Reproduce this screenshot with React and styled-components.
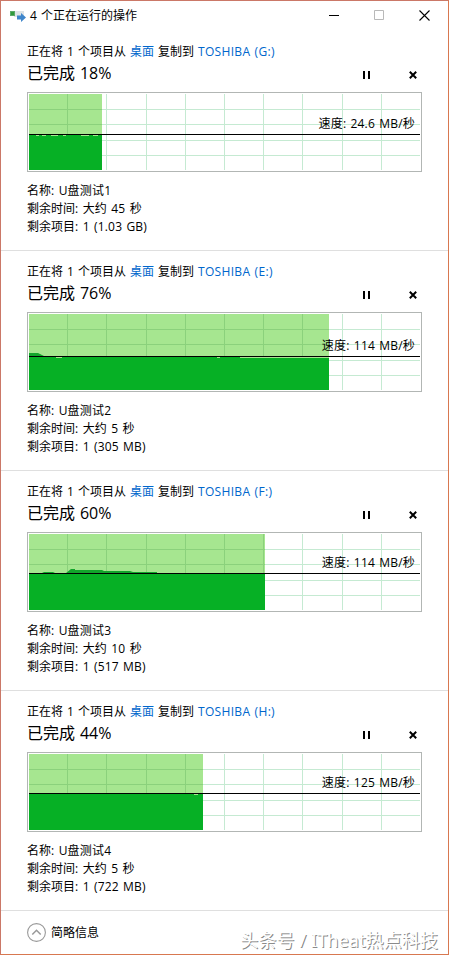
import styled, { createGlobalStyle } from "styled-components";

const tasks = [
  {
    id: 1,
    drive: "TOSHIBA (G:)",
    percent: 18,
    speed: "24.6 MB/秒",
    name: "U盘测试1",
    time: "大约 45 秒",
    items: "1 (1.03 GB)",
    fill: 73,
    line: 40,
    gaps: [[7, 3], [13, 4], [22, 7], [34, 3], [52, 8], [64, 5]],
  },
  {
    id: 2,
    drive: "TOSHIBA (E:)",
    percent: 76,
    speed: "114 MB/秒",
    name: "U盘测试2",
    time: "大约 5 秒",
    items: "1 (305 MB)",
    fill: 300,
    line: 42,
    bump: "M0 42V39H9L15 42Z",
    gaps: [[27, 6], [188, 3], [211, 89]],
  },
  {
    id: 3,
    drive: "TOSHIBA (F:)",
    percent: 60,
    speed: "114 MB/秒",
    name: "U盘测试3",
    time: "大约 10 秒",
    items: "1 (517 MB)",
    fill: 236,
    line: 39,
    bump: "M13 39L15 38H24L26 39H37L42 35H46V36H73L75 37H101L104 38H128V39Z",
    gaps: [],
  },
  {
    id: 4,
    drive: "TOSHIBA (H:)",
    percent: 44,
    speed: "125 MB/秒",
    name: "U盘测试4",
    time: "大约 5 秒",
    items: "1 (722 MB)",
    fill: 174,
    line: 39,
    gaps: [[165, 4]],
  },
];

const gridX = [38, 77, 117, 156, 195, 234, 273, 313, 352];
const gridY = [15, 30, 46, 61];

function Chart({ task }) {
  const { fill, line, bump, gaps, speed } = task;
  return (
    <ChartBox>
      <svg width="391" height="76" shapeRendering="crispEdges">
        <rect width={fill} height="76" fill="#a6e690" />
        {gridX.map((x) => (
          <rect key={x} x={x} width="1" height="76" fill={x < fill ? "#8bd17c" : "#c5ead2"} />
        ))}
        {gridY.map((y) => (
          <g key={y}>
            <rect y={y} width="391" height="1" fill="#c5ead2" />
            <rect y={y} width={fill} height="1" fill="#8bd17c" />
          </g>
        ))}
        <rect y={line} width={fill} height={76 - line} fill="#06b025" />
        {bump && <path d={bump} fill="#12a52b" shapeRendering="auto" />}
        {gaps.map(([x, w]) => (
          <rect key={x} x={x} y={line + 1} width={w} height="1" fill="#a6e690" />
        ))}
        <rect y={line} width="391" height="1" fill="#000" />
      </svg>
      <Speed $line={line}>速度: {speed}</Speed>
    </ChartBox>
  );
}

function CopyTask({ task }) {
  return (
    <Section>
      <Line>
        正在将 1 个项目从 <Link>桌面</Link> 复制到 <Link $spacing="0.32px">{task.drive}</Link>
      </Line>
      <Heading>
        <Percent>已完成 {task.percent}%</Percent>
        <Buttons>
          <svg width="7" height="8" shapeRendering="crispEdges">
            <path d="M0 0h2v8H0zM5 0h2v8H5z" fill="#000" />
          </svg>
          <svg width="8" height="8">
            <path d="M0.800 0.800L7.200 7.200M7.200 0.800L0.800 7.200" stroke="#000" strokeWidth="2" />
          </svg>
        </Buttons>
      </Heading>
      <Chart task={task} />
      <Line>
        名称: <Value>{task.name}</Value>
      </Line>
      <Line>
        剩余时间: <Value>{task.time}</Value>
      </Line>
      <Line>
        剩余项目: <Value>{task.items}</Value>
      </Line>
    </Section>
  );
}

function App() {
  return (
    <>
      <GlobalStyle />
      <Window>
        <TitleBar>
          <svg width="16" height="12">
            <rect x="4" y="1" width="10" height="6" fill="#dde3e6" />
            <rect x="0" y="1" width="5" height="5" fill="#5aa868" />
            <rect x="1" y="2" width="3" height="3" fill="#2f9a3c" />
            <path d="M7 5.500h4V3l5 4.500-5 4.500V9.500H7z" fill="#3f86cb" />
          </svg>
          <Title>4 个正在运行的操作</Title>
          <Controls>
            <svg width="10" height="10">
              <path d="M0 5.500h10" stroke="#000" />
            </svg>
            <svg width="10" height="10">
              <path d="M0.500 0.500h9v9h-9z" fill="none" stroke="#b9b9b9" />
            </svg>
            <svg width="11" height="11">
              <path d="M0.500 0.500l10 10M10.500 0.500l-10 10" stroke="#000" strokeWidth="1.1" />
            </svg>
          </Controls>
        </TitleBar>
        {tasks.map((task) => (
          <CopyTask key={task.id} task={task} />
        ))}
        <Footer>
          <svg width="19" height="19" fill="none">
            <circle cx="9.500" cy="9.500" r="8.900" stroke="#999" strokeWidth="1.1" />
            <path d="M5.300 11.500l4.200-4.200 4.200 4.200" stroke="#999" strokeWidth="1.5" />
          </svg>
          <Less>简略信息</Less>
          <Watermark>头条号 / ITheat热点科技</Watermark>
        </Footer>
      </Window>
    </>
  );
}

export default App;

const GlobalStyle = createGlobalStyle`
  body {
    margin: 0;
    background: #fff;
    color: #000;
    font-family: "Open Sans", "Noto Sans CJK SC", sans-serif;
    font-size: 12px;
  }
  svg {
    display: block;
    flex: none;
  }
`;

const Window = styled.div`
  box-sizing: border-box;
  width: 449px;
  height: 955px;
  border: 1px solid #d87850;
  border-left-color: #cb7867;
  border-top-color: #cb7867;
  display: flex;
  flex-direction: column;
  overflow: hidden;
`;

const TitleBar = styled.div`
  display: flex;
  align-items: center;
  height: 30px;
  padding: 0 18px 0 9px;
  box-sizing: border-box;
`;

const Title = styled.div`
  margin-left: 4px;
  line-height: 18px;
  word-spacing: 0.9px;
  white-space: nowrap;
`;

const Controls = styled.div`
  display: flex;
  align-items: center;
  gap: 35px;
  margin-left: auto;
  padding-bottom: 2px;
`;

const Section = styled.section`
  box-sizing: border-box;
  height: 220px;
  flex: none;
  padding: 12px 26px 0;
  border-bottom: 1px solid #dfdfdf;
`;

const Line = styled.div`
  line-height: 18px;
  word-spacing: 0.9px;
  white-space: nowrap;
`;

const Link = styled.span`
  color: #0066cc;
  letter-spacing: ${(props) => props.$spacing || "normal"};
`;

const Value = styled.span`
  margin-left: 0.5px;
  letter-spacing: 0.2px;
`;

const Heading = styled.div`
  display: flex;
  align-items: center;
  justify-content: space-between;
  margin-top: 1px;
  height: 22px;
`;

const Percent = styled.div`
  font-size: 16px;
  line-height: 22px;
  word-spacing: 0.8px;
  white-space: nowrap;
`;

const Buttons = styled.div`
  display: flex;
  gap: 39px;
  padding: 4px 5px 0 0;
`;

const ChartBox = styled.div`
  position: relative;
  box-sizing: border-box;
  width: 395px;
  height: 80px;
  margin: 8px 0 10px;
  padding: 1px;
  border: 1px solid #b2b6b4;
`;

const Speed = styled.div`
  position: absolute;
  right: 6px;
  top: ${(props) => props.$line - 18}px;
  line-height: 18px;
  letter-spacing: 0.2px;
  word-spacing: 0.9px;
  white-space: nowrap;
`;

const Footer = styled.div`
  display: flex;
  align-items: center;
  height: 43px;
  padding: 0 10px 0 26px;
`;

const Less = styled.div`
  margin-left: 5px;
  line-height: 18px;
`;

const Watermark = styled.div`
  margin-left: auto;
  padding-top: 14px;
  font-family: "Noto Sans", "Noto Sans CJK SC", sans-serif;
  font-size: 18px;
  line-height: 24px;
  letter-spacing: 0.1px;
  color: #fff;
  text-shadow: 1px 1px 0 #8a8a8a;
  white-space: nowrap;
`;
